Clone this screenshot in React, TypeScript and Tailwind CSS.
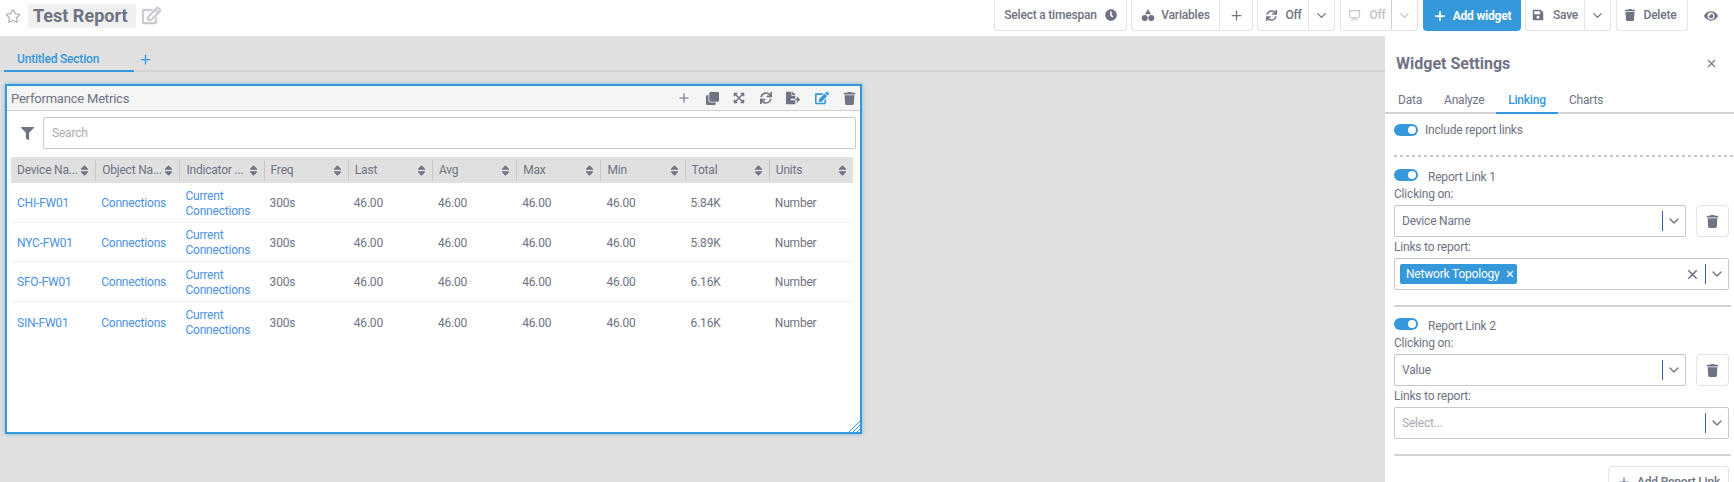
import { FaClock, FaEdit, FaEye, FaFileExport, FaFilter, FaRegEdit, FaRegStar, FaSave, FaSort, FaSync, FaTrash, FaExpandArrowsAlt, FaClone } from "react-icons/fa";
import { ChevronDown, Plus, Presentation, X } from "lucide-react";
import type { ReactNode } from "react";

const columns = ["Device Na...", "Object Na...", "Indicator ...", "Freq", "Last", "Avg", "Max", "Min", "Total", "Units"];

const rows = [
  { device: "CHI-FW01", total: "5.84K" },
  { device: "NYC-FW01", total: "5.89K" },
  { device: "SFO-FW01", total: "6.16K" },
  { device: "SIN-FW01", total: "6.16K" },
];

// three little shapes on the "Variables" button
function ShapesIcon() {
  return (
    <svg width="14" height="14" viewBox="0 0 14 14" className="fill-[#6f7383]">
      <path d="M7 1 L10 6.2 H4 Z" />
      <circle cx="3.7" cy="10" r="3" />
      <circle cx="10.3" cy="10" r="3" />
    </svg>
  );
}

function Toggle() {
  return (
    <div className="flex h-3 w-6 items-center justify-end rounded-full bg-[#3498db] pr-[2px]">
      <div className="size-2 rounded-full bg-white" />
    </div>
  );
}

function ToolButton({ children, className = "" }: { children: ReactNode; className?: string }) {
  return (
    <div className={`flex h-[31px] items-center rounded-b border border-t-0 border-[#e3e3e3] bg-white text-[#6f7383] ${className}`}>
      {children}
    </div>
  );
}

function SelectBox({ children, clear, className = "" }: { children: ReactNode; clear?: boolean; className?: string }) {
  return (
    <div className={`flex h-8 items-center rounded-[2px] border border-[#c8c8c8] bg-white ${className}`}>
      <div className="flex min-w-0 flex-1 items-center">{children}</div>
      {clear && <X size={15} strokeWidth={2.5} className="mr-[5px] text-[#6f7383]" />}
      <div className="h-[20px] w-px bg-[#3f5fa8]" />
      <ChevronDown size={16} className="mx-[3px] text-[#6f7383]" />
    </div>
  );
}

function LinkBlock({ title, clicking, report }: { title: string; clicking: string; report: ReactNode }) {
  return (
    <div>
      <div className="flex h-[14px] items-center">
        <Toggle />
        <span className="ml-[10px] mt-1 text-xs">{title}</span>
      </div>
      <div className="mt-[4px] h-[16px] text-xs leading-4">Clicking on:</div>
      <div className="mt-[3px] flex gap-[10px] pr-[5px]">
        <SelectBox className="flex-1">
          <span className="pl-[7px] text-xs">{clicking}</span>
        </SelectBox>
        <div className="flex h-8 w-[33px] items-center justify-center rounded border border-[#e3e3e3]">
          <FaTrash size={13} />
        </div>
      </div>
      <div className="mb-[2px] mt-[1px] h-[18px] text-xs leading-[18px]">Links to report:</div>
      <div className="pr-[5px]">{report}</div>
    </div>
  );
}

export default function App() {
  return (
    <div className="flex h-[482px] w-[1734px] flex-col overflow-hidden bg-[#e0e0e0] font-['Roboto',sans-serif] text-xs tracking-[-0.2px] text-[#6f7383]">
      <header className="flex h-9 shrink-0 items-start bg-white">
        <div className="flex h-[31px] items-center pl-[5px]">
          <FaRegStar size={16} className="text-[#b5b7c0]" />
          <div className="ml-[7px] flex h-6 w-[108px] items-center rounded-[2px] bg-[#f0f0f0] pl-[5px] text-lg leading-none font-bold tracking-normal">
            Test Report
          </div>
          <FaRegEdit size={19} className="ml-[6px] stroke-[#c6c8ce] stroke-[20] text-[#c6c8ce]" />
        </div>
        <div className="ml-auto flex items-start font-medium">
          <ToolButton className="w-[133px] justify-center gap-2">
            Select a timespan <FaClock size={12} />
          </ToolButton>
          <ToolButton className="ml-1 w-[122px]">
            <div className="flex h-full w-[88px] items-center justify-center gap-[6px] border-r border-[#e3e3e3]">
              <ShapesIcon /> Variables
            </div>
            <Plus size={15} className="mx-auto" />
          </ToolButton>
          <ToolButton className="ml-1 w-[78px]">
            <div className="flex h-full w-[51px] items-center justify-center gap-[8px] border-r border-[#e3e3e3] pl-[2px]">
              <FaSync size={11} /> Off
            </div>
            <ChevronDown size={15} className="mx-auto" />
          </ToolButton>
          <ToolButton className="ml-[5px] w-[78px] border-[#cfcfcf] bg-[#f7f7f7] text-[#c3c5cb]">
            <div className="flex h-full w-[51px] items-center justify-center gap-[8px] border-r border-[#cfcfcf] pl-[2px]">
              <Presentation size={13} /> Off
            </div>
            <ChevronDown size={15} className="mx-auto" />
          </ToolButton>
          <div className="ml-[5px] flex h-[31px] w-[98px] items-center justify-center gap-[6px] rounded-b bg-[#3498db] font-bold text-white">
            <Plus size={14} strokeWidth={3} /> Add widget
          </div>
          <ToolButton className="ml-1 w-[86px]">
            <div className="flex h-full w-[59px] items-center justify-center gap-[9px] border-r border-[#e3e3e3]">
              <FaSave size={12} /> Save
            </div>
            <ChevronDown size={15} className="mx-auto" />
          </ToolButton>
          <ToolButton className="ml-[5px] w-[72px] justify-center gap-2 pr-1">
            <FaTrash size={12} /> Delete
          </ToolButton>
          <div className="flex h-[31px] w-[46px] items-center justify-center">
            <FaEye size={14} />
          </div>
        </div>
      </header>

      <div className="flex min-h-0 flex-1">
        <main className="min-w-0 flex-1">
          <div className="flex h-[36px] items-end border-b-2 border-[#d2d2d2] pl-1">
            <div className="-mb-[2px] h-[21px] w-[130px] border-b-2 border-[#3498db] pl-[13px] font-medium leading-[16px] text-[#3498db]">
              Untitled Section
            </div>
            <Plus size={15} className="mb-[3px] ml-[4px] text-[#3498db]" />
          </div>

          <section className="relative ml-[5px] mt-[12px] h-[350px] w-[857px] border-2 border-[#3498db] bg-white shadow-[0_0_4px_rgba(52,152,219,0.6)]">
            <div className="flex h-[25px] items-center border-b border-[#cfcfcf] bg-[#f5f5f5] pl-[4px] pr-1 text-[13px]">
              <span className="flex-1 pt-[1px]">Performance Metrics</span>
              <div className="flex items-center gap-[14.5px] text-[#6f7383]">
                <Plus size={14} />
                <FaClone size={13} />
                <FaExpandArrowsAlt size={12} />
                <FaSync size={12} />
                <FaFileExport size={14} />
                <FaEdit size={14} className="text-[#3498db]" />
                <FaTrash size={13} />
              </div>
            </div>

            <div className="flex items-center pt-[6px] pl-[5px] pr-1">
              <FaFilter size={13} className="ml-[9px] mr-[9px]" />
              <div className="flex h-8 flex-1 items-center rounded-[2px] border border-[#c8c8c8] pl-2 text-[#a9abb3]">Search</div>
            </div>

            <div className="ml-1 mr-[7px] mt-2">
              <div className="grid h-[26px] grid-cols-10 items-center bg-[#e0e0e0]">
                {columns.map((name, i) => (
                  <div key={name} className={`flex h-5 items-center px-[6px] ${i > 0 ? "border-l border-[#c9c9c9]" : ""}`}>
                    <span className="min-w-0 flex-1 truncate">{name}</span>
                    <FaSort size={13} className="-mx-[2px] shrink-0" />
                  </div>
                ))}
              </div>
              {rows.map((row) => (
                <div key={row.device} className="grid h-[39.6px] grid-cols-10 items-center border-b border-[#f0f0f0] pt-[3px] leading-[15px] last:border-b-0">
                  <div className="pl-[6px] text-[#4a90e2]">{row.device}</div>
                  <div className="pl-[6px] text-[#4a90e2]">Connections</div>
                  <div className="pl-[6px] text-[#4a90e2]">
                    Current
                    <br />
                    Connections
                  </div>
                  <div className="pl-[6px]">300s</div>
                  <div className="pl-[6px]">46.00</div>
                  <div className="pl-[6px]">46.00</div>
                  <div className="pl-[6px]">46.00</div>
                  <div className="pl-[6px]">46.00</div>
                  <div className="pl-[6px]">{row.total}</div>
                  <div className="pl-[6px]">Number</div>
                </div>
              ))}
            </div>

            {/* resize handle */}
            <svg width="11" height="11" viewBox="0 0 11 11" className="absolute bottom-0 right-0 stroke-[#3498db]">
              <path d="M0 11 L11 0 M4 11 L11 4 M8 11 L11 8" />
            </svg>
          </section>
        </main>

        <aside className="w-[349px] shrink-0 bg-white">
          <div className="flex h-[55px] items-center justify-between pl-[11px] pr-[16px]">
            <h2 className="text-base font-bold tracking-normal">Widget Settings</h2>
            <X size={13} />
          </div>
          <div className="flex h-[23px] border-b-2 border-[#d2d2d2] pl-[11px]">
            <div className="h-[23px] w-[48px] pt-[1px] pl-[2px]">Data</div>
            <div className="h-[23px] w-[52px] pt-[1px]">Analyze</div>
            <div className="h-[23px] w-[62px] border-b-2 border-[#3498db] pt-[1px] text-center font-medium text-[#3498db]">Linking</div>
            <div className="ml-[11px] h-[23px] pt-[1px]">Charts</div>
          </div>

          <div className="pl-[9px] pt-[9px]">
            <div className="flex h-[14px] items-center">
              <Toggle />
              <span className="ml-[7px]">Include report links</span>
            </div>
            <div className="mb-[11px] mt-[18px] h-[2px] bg-[repeating-linear-gradient(90deg,#c8c8c8_0_3px,transparent_3px_6px)]" />
            <LinkBlock
              title="Report Link 1"
              clicking="Device Name"
              report={
                <SelectBox clear>
                  <div className="ml-[5px] flex h-5 w-[117px] items-center rounded-[2px] bg-[#3498db] pl-[6px] text-white">
                    <span className="flex-1 whitespace-nowrap">Network Topology</span>
                    <X size={10} strokeWidth={3} className="mr-[2px]" />
                  </div>
                </SelectBox>
              }
            />
            <div className="mb-[10px] mr-[3px] mt-[15px] border-t-2 border-[#d2d2d2]" />
            <LinkBlock
              title="Report Link 2"
              clicking="Value"
              report={
                <SelectBox>
                  <span className="pl-[7px] text-[#a9abb3]">Select...</span>
                </SelectBox>
              }
            />
            <div className="mb-[10px] mr-[3px] mt-[15px] border-t-2 border-[#d2d2d2]" />
            <div className="flex justify-end pr-[5px]">
              <div className="flex h-[31px] w-[121px] items-center justify-center gap-[6px] rounded border border-[#e3e3e3] font-medium">
                <Plus size={14} /> Add Report Link
              </div>
            </div>
          </div>
        </aside>
      </div>
    </div>
  );
}
